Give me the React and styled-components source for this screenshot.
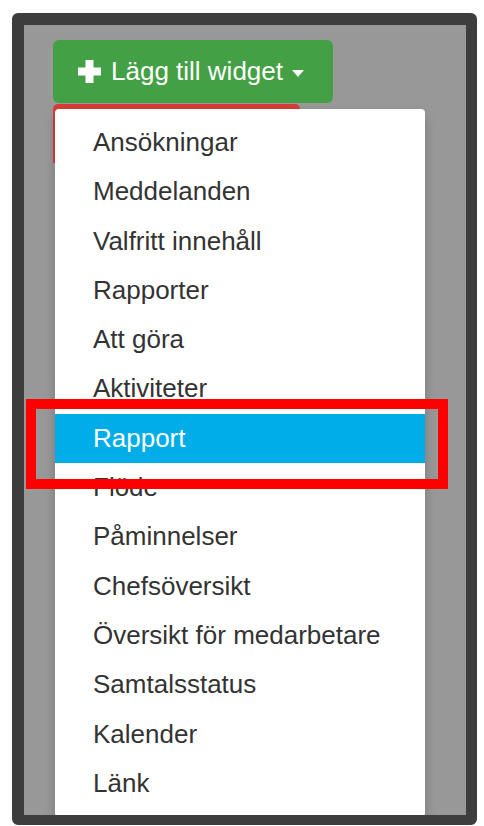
import React from 'react';
import styled, { createGlobalStyle } from 'styled-components';

const GlobalStyle = createGlobalStyle`
  html, body {
    margin: 0;
    padding: 0;
    background: #ffffff;
  }
  body {
    font-family: "Liberation Sans", Arial, sans-serif;
  }
`;

const Frame = styled.div`
  position: relative;
  box-sizing: border-box;
  width: 465px;
  height: 812px;
  margin: 13px 0 0 12px;
  border-style: solid;
  border-color: #3d3d3d;
  border-width: 12px 11px 10px 12px;
  border-radius: 6px;
  background: #989898;
  padding: 15px 0 0 29px;
  overflow: hidden;
`;

const DropdownWrap = styled.div`
  position: relative;
  width: 280px;
`;

const AddButton = styled.button`
  display: flex;
  align-items: center;
  box-sizing: border-box;
  width: 280px;
  height: 63px;
  padding: 0 0 0 24px;
  border: none;
  border-radius: 6px;
  background: #43a045;
  color: #ffffff;
  font-family: "Liberation Sans", Arial, sans-serif;
  font-size: 26px;
  cursor: pointer;
`;

const ButtonLabel = styled.span`
  margin-left: 9px;
  line-height: 1;
  padding-bottom: 2px;
`;

const Caret = styled.span`
  width: 0;
  height: 0;
  margin-left: 9px;
  margin-top: 3px;
  border-top: 7px solid #ffffff;
  border-left: 6.5px solid transparent;
  border-right: 6.5px solid transparent;
`;

const Widget = styled.div`
  width: 247px;
  height: 59px;
  margin-top: 1px;
  background: #d63d39;
  border-radius: 5px 5px 0 0;
`;

const Menu = styled.ul`
  position: absolute;
  top: 69px;
  left: 2px;
  width: 370px;
  margin: 0;
  padding: 9px 0;
  list-style: none;
  background: #ffffff;
  border-radius: 4px;
  box-shadow: 0 6px 12px rgba(0, 0, 0, 0.2);
`;

const Item = styled.li`
  height: 49.3px;
  line-height: 49.3px;
  padding-left: 38px;
  font-size: 26px;
  white-space: nowrap;
  color: ${(p) => (p.active ? '#ffffff' : '#333333')};
  background: ${(p) => (p.active ? '#00ade8' : 'transparent')};
`;

const Highlight = styled.div`
  position: absolute;
  left: 2px;
  top: 374px;
  box-sizing: border-box;
  width: 422px;
  height: 90px;
  border: 10px solid #ff0000;
  pointer-events: none;
`;

const PlusIcon = () => (
  <svg width="25" height="25" viewBox="0 0 25 25" aria-hidden="true">
    <path
      d="M8.5 1h8v7.5H24v8h-7.5V24h-8v-7.5H1v-8h7.5z"
      fill="#ffffff"
    />
  </svg>
);

const items = [
  'Ansökningar',
  'Meddelanden',
  'Valfritt innehåll',
  'Rapporter',
  'Att göra',
  'Aktiviteter',
  'Rapport',
  'Flöde',
  'Påminnelser',
  'Chefsöversikt',
  'Översikt för medarbetare',
  'Samtalsstatus',
  'Kalender',
  'Länk',
];

export default function App() {
  return (
    <>
      <GlobalStyle />
      <Frame>
        <DropdownWrap>
          <AddButton>
            <PlusIcon />
            <ButtonLabel>Lägg till widget</ButtonLabel>
            <Caret />
          </AddButton>
          <Widget />
          <Menu>
            {items.map((name) => (
              <Item key={name} active={name === 'Rapport'}>
                {name}
              </Item>
            ))}
          </Menu>
        </DropdownWrap>
        <Highlight />
      </Frame>
    </>
  );
}
